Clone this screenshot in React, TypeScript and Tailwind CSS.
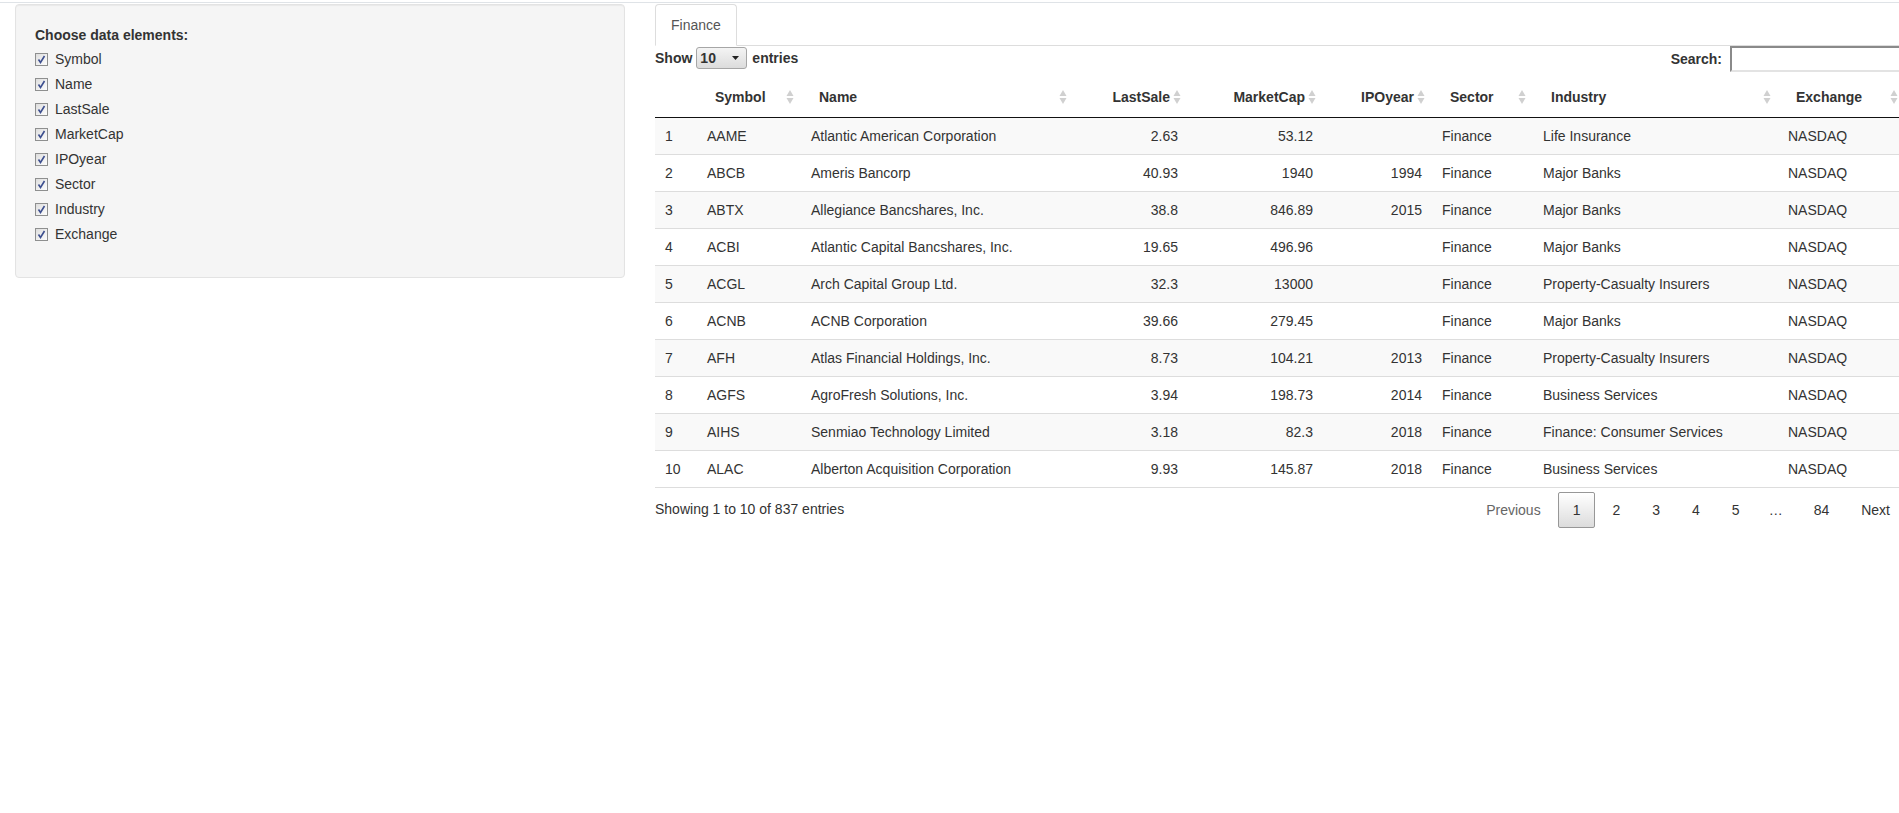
import React from 'react';

type Row = [string, string, string, string, string, string, string, string];

const rows: Row[] = [
  ['AAME', 'Atlantic American Corporation', '2.63', '53.12', '', 'Finance', 'Life Insurance', 'NASDAQ'],
  ['ABCB', 'Ameris Bancorp', '40.93', '1940', '1994', 'Finance', 'Major Banks', 'NASDAQ'],
  ['ABTX', 'Allegiance Bancshares, Inc.', '38.8', '846.89', '2015', 'Finance', 'Major Banks', 'NASDAQ'],
  ['ACBI', 'Atlantic Capital Bancshares, Inc.', '19.65', '496.96', '', 'Finance', 'Major Banks', 'NASDAQ'],
  ['ACGL', 'Arch Capital Group Ltd.', '32.3', '13000', '', 'Finance', 'Property-Casualty Insurers', 'NASDAQ'],
  ['ACNB', 'ACNB Corporation', '39.66', '279.45', '', 'Finance', 'Major Banks', 'NASDAQ'],
  ['AFH', 'Atlas Financial Holdings, Inc.', '8.73', '104.21', '2013', 'Finance', 'Property-Casualty Insurers', 'NASDAQ'],
  ['AGFS', 'AgroFresh Solutions, Inc.', '3.94', '198.73', '2014', 'Finance', 'Business Services', 'NASDAQ'],
  ['AIHS', 'Senmiao Technology Limited', '3.18', '82.3', '2018', 'Finance', 'Finance: Consumer Services', 'NASDAQ'],
  ['ALAC', 'Alberton Acquisition Corporation', '9.93', '145.87', '2018', 'Finance', 'Business Services', 'NASDAQ'],
];

type Col = { label: string; w: string; right?: boolean; sort?: boolean };

const cols: Col[] = [
  { label: '', w: 'w-[42px]', sort: false },
  { label: 'Symbol', w: 'w-[104px]', sort: true },
  { label: 'Name', w: 'w-[273px]', sort: true },
  { label: 'LastSale', w: 'w-[114px]', right: true, sort: true },
  { label: 'MarketCap', w: 'w-[135px]', right: true, sort: true },
  { label: 'IPOyear', w: 'w-[109px]', right: true, sort: true },
  { label: 'Sector', w: 'w-[101px]', sort: true },
  { label: 'Industry', w: 'w-[245px]', sort: true },
  { label: 'Exchange', w: 'w-[127px]', sort: true },
];

const elements = ['Symbol', 'Name', 'LastSale', 'MarketCap', 'IPOyear', 'Sector', 'Industry', 'Exchange'];

function CheckBox() {
  return (
    <svg width="13" height="13" viewBox="0 0 13 13" className="shrink-0">
      <defs>
        <linearGradient id="cbg" x1="0" y1="0" x2="1" y2="1">
          <stop offset="0" stopColor="#dcdcdc" />
          <stop offset="1" stopColor="#ffffff" />
        </linearGradient>
      </defs>
      <rect x="0.5" y="0.5" width="12" height="12" fill="url(#cbg)" stroke="#8e8f8f" />
      <path d="M3.5 6.5 L5.5 9.5 L9.5 3" fill="none" stroke="#3d4f8f" strokeWidth="1.6" />
    </svg>
  );
}

function SortIcon() {
  return (
    <svg width="8" height="16" viewBox="0 0 8 16" className="absolute right-[7px] top-1/2 -translate-y-1/2">
      <polygon points="0.5,7 4,1 7.5,7" fill="#d0d0d0" />
      <polygon points="0.5,9 7.5,9 4,15" fill="#d0d0d0" />
    </svg>
  );
}

export default function App() {
  return (
    <div className="w-full h-[813px] overflow-hidden bg-white font-['Liberation_Sans',Arial,Helvetica,sans-serif] text-[14px] leading-5 text-[#333]">
      <div className="w-[1920px]">
        <div className="mt-[2px] h-px bg-[#dfe3e7]" />
        <div className="mt-px flex items-start">
          {/* Sidebar */}
          <div className="w-[640px] px-[15px]">
            <div className="border border-[#e3e3e3] bg-[#f5f5f5] rounded-[4px] shadow-[inset_0_1px_1px_rgba(0,0,0,0.05)] pt-[20px] px-[19px] pb-[19px]">
              <div className="font-bold mb-[4px]">Choose data elements:</div>
              <div className="flex flex-col gap-[5px] mb-[14px]">
                {elements.map((e) => (
                  <div key={e} className="flex items-center h-5 gap-[7px]">
                    <CheckBox />
                    <span>{e}</span>
                  </div>
                ))}
              </div>
            </div>
          </div>

          {/* Main */}
          <div className="w-[1280px] px-[15px]">
            {/* Tabs */}
            <div className="flex border-b border-[#ddd] h-[42px]">
              <div className="h-[42px] px-[15px] py-[10px] border border-[#ddd] border-b-transparent rounded-t-[4px] bg-white text-[#555]">
                Finance
              </div>
            </div>

            {/* Toolbar */}
            <div className="flex justify-between items-start h-[31px]">
              <div className="mt-px flex items-center h-[22px] font-bold">
                <span>Show</span>
                <div className="ml-[4px] w-[51px] h-[22px] border border-[#a6a6a6] rounded-[3px] bg-gradient-to-b from-[#f4f4f4] to-[#dcdcdc] flex items-center justify-between pl-[3px] pr-[7px]">
                  <span className="font-bold">10</span>
                  <svg width="7" height="4" viewBox="0 0 7 4">
                    <polygon points="0,0 7,0 3.5,4" fill="#222" />
                  </svg>
                </div>
                <span className="ml-[5px]">entries</span>
              </div>
              <div className="flex items-center h-[26px]">
                <span className="font-bold">Search:</span>
                <div className="ml-[8px] w-[175px] h-[26px] border-2 border-t-[#8a8a8a] border-l-[#8a8a8a] border-b-[#e3e3e3] border-r-[#e3e3e3] bg-white" />
              </div>
            </div>

            {/* Table */}
            <table className="w-[1250px] table-fixed border-separate border-spacing-0">
              <thead>
                <tr>
                  {cols.map((c, i) => (
                    <th
                      key={i}
                      className={`${c.w} relative px-[18px] py-[10px] font-bold leading-5 border-b border-[#111] ${c.right ? 'text-right' : 'text-left'}`}
                    >
                      {c.label}
                      {c.sort && <SortIcon />}
                    </th>
                  ))}
                </tr>
              </thead>
              <tbody>
                {rows.map((r, ri) => {
                  const cells = [String(ri + 1), ...r];
                  const bg = ri % 2 === 0 ? 'bg-[#f9f9f9]' : 'bg-white';
                  const bt = ri > 0 ? 'border-t border-[#ddd]' : '';
                  const bb = ri === rows.length - 1 ? 'border-b border-[#111]' : '';
                  return (
                    <tr key={ri} className={bg}>
                      {cells.map((v, ci) => (
                        <td
                          key={ci}
                          className={`px-[10px] py-[8px] leading-5 whitespace-nowrap ${bt} ${bb} ${cols[ci].right ? 'text-right' : 'text-left'}`}
                        >
                          {v}
                        </td>
                      ))}
                    </tr>
                  );
                })}
              </tbody>
            </table>

            {/* Footer */}
            <div className="flex justify-between items-start">
              <div className="mt-[11px]">Showing 1 to 10 of 837 entries</div>
              <div className="mt-[4px] flex items-center">
                <span className="ml-[2px] px-[14px] py-[7px] border border-transparent text-[#666]">Previous</span>
                <span className="ml-[2px] px-[14px] py-[7px] border border-[#979797] rounded-[2px] bg-gradient-to-b from-white to-[#dcdcdc] text-[#333]">1</span>
                <span className="ml-[2px] px-[14px] py-[7px] border border-transparent">2</span>
                <span className="ml-[2px] px-[14px] py-[7px] border border-transparent">3</span>
                <span className="ml-[2px] px-[14px] py-[7px] border border-transparent">4</span>
                <span className="ml-[2px] px-[14px] py-[7px] border border-transparent">5</span>
                <span className="px-[14px] py-[7px]">…</span>
                <span className="ml-[2px] px-[14px] py-[7px] border border-transparent">84</span>
                <span className="ml-[2px] px-[14px] py-[7px] border border-transparent">Next</span>
              </div>
            </div>
          </div>
        </div>
      </div>
    </div>
  );
}
